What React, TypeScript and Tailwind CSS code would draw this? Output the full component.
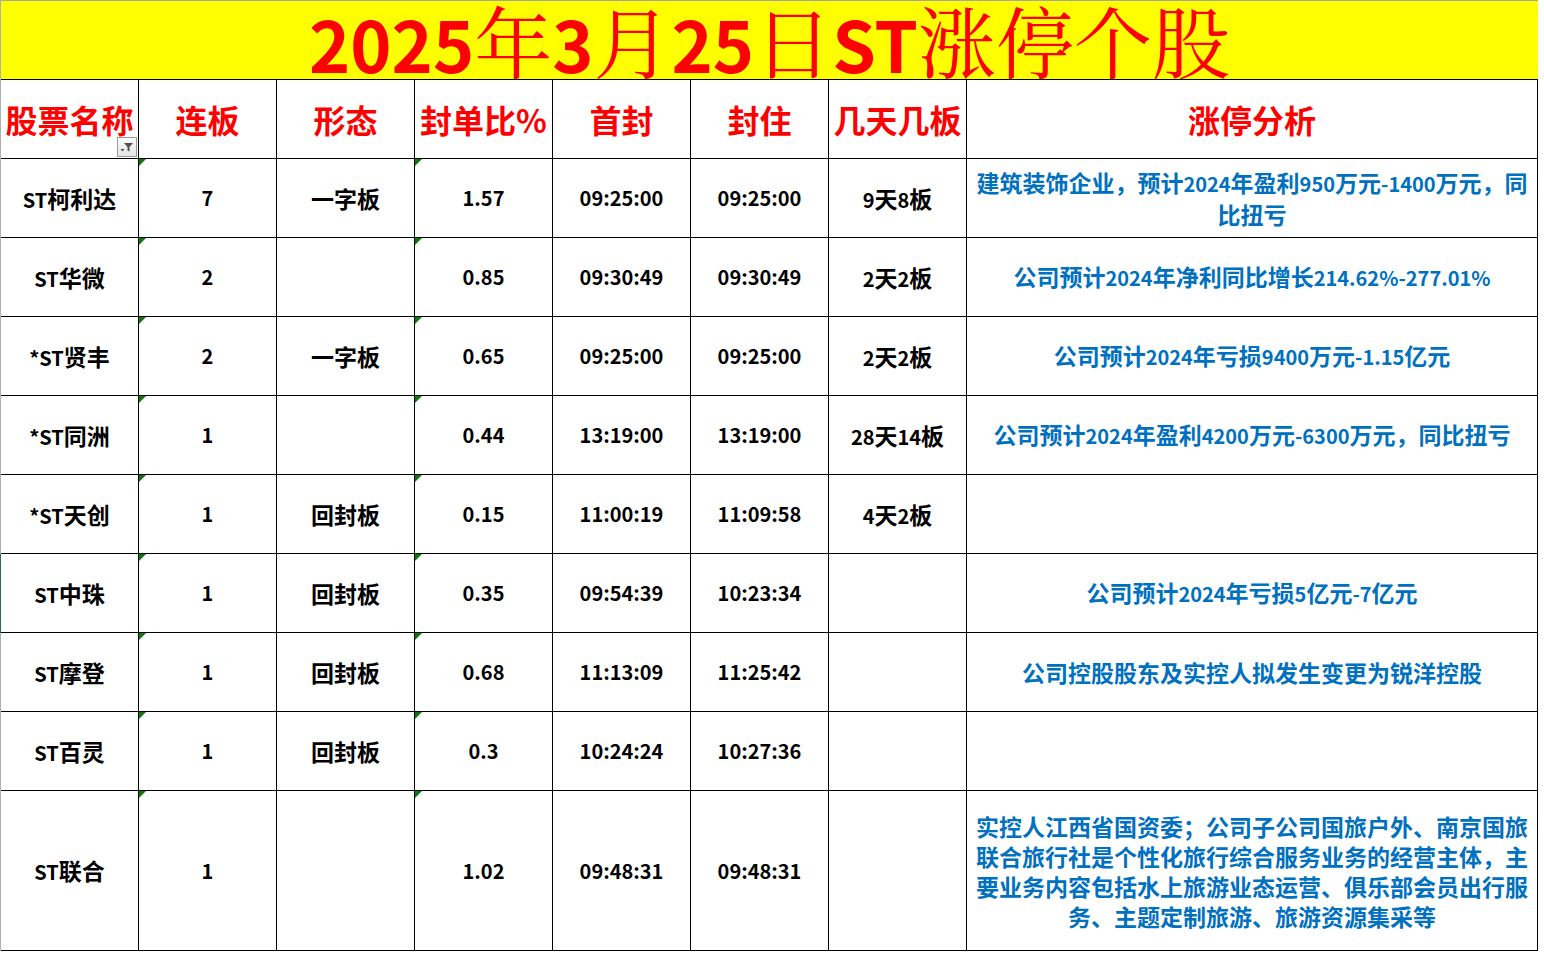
import React from "react";

type Row = {
  name: string;
  lb: string;
  xt: string;
  fd: string;
  sf: string;
  fz: string;
  jt: string;
  an: string[];
  tall?: boolean;
};

const rows: Row[] = [
  { name: "ST柯利达", lb: "7", xt: "一字板", fd: "1.57", sf: "09:25:00", fz: "09:25:00", jt: "9天8板", an: ["建筑装饰企业，预计2024年盈利950万元-1400万元，同", "比扭亏"] },
  { name: "ST华微", lb: "2", xt: "", fd: "0.85", sf: "09:30:49", fz: "09:30:49", jt: "2天2板", an: ["公司预计2024年净利同比增长214.62%-277.01%"] },
  { name: "*ST贤丰", lb: "2", xt: "一字板", fd: "0.65", sf: "09:25:00", fz: "09:25:00", jt: "2天2板", an: ["公司预计2024年亏损9400万元-1.15亿元"] },
  { name: "*ST同洲", lb: "1", xt: "", fd: "0.44", sf: "13:19:00", fz: "13:19:00", jt: "28天14板", an: ["公司预计2024年盈利4200万元-6300万元，同比扭亏"] },
  { name: "*ST天创", lb: "1", xt: "回封板", fd: "0.15", sf: "11:00:19", fz: "11:09:58", jt: "4天2板", an: [] },
  { name: "ST中珠", lb: "1", xt: "回封板", fd: "0.35", sf: "09:54:39", fz: "10:23:34", jt: "", an: ["公司预计2024年亏损5亿元-7亿元"] },
  { name: "ST摩登", lb: "1", xt: "回封板", fd: "0.68", sf: "11:13:09", fz: "11:25:42", jt: "", an: ["公司控股股东及实控人拟发生变更为锐洋控股"] },
  { name: "ST百灵", lb: "1", xt: "回封板", fd: "0.3", sf: "10:24:24", fz: "10:27:36", jt: "", an: [] },
  {
    name: "ST联合",
    lb: "1",
    xt: "",
    fd: "1.02",
    sf: "09:48:31",
    fz: "09:48:31",
    jt: "",
    tall: true,
    an: [
      "实控人江西省国资委；公司子公司国旅户外、南京国旅",
      "联合旅行社是个性化旅行综合服务业务的经营主体，主",
      "要业务内容包括水上旅游业态运营、俱乐部会员出行服",
      "务、主题定制旅游、旅游资源集采等",
    ],
  },
];

const headers = ["股票名称", "连板", "形态", "封单比%", "首封", "封住", "几天几板", "涨停分析"];

const FONT = { fontFamily: '"Noto Sans CJK SC", "Noto Sans", sans-serif' };
const SERIF = { fontFamily: '"Noto Serif CJK SC", "Noto Sans CJK SC", serif' };

// Render ASCII runs a little smaller so Latin/digits match the narrower reference face.
function Mixed({ text }: { text: string }) {
  const parts = text.split(/([\x20-\x7E]+)/).filter((p) => p.length > 0);
  return (
    <>
      {parts.map((p, i) =>
        /^[\x20-\x7E]+$/.test(p) ? (
          <span key={i} className="text-[20px]">
            {p}
          </span>
        ) : (
          <span key={i}>{p}</span>
        )
      )}
    </>
  );
}

function Tri() {
  return (
    <span className="absolute left-0 top-0 h-0 w-0 border-t-[7px] border-r-[7px] border-t-[#0b7a0b] border-r-transparent" />
  );
}

function FilterBtn() {
  return (
    <span className="absolute right-[1px] bottom-[1px] flex h-[20px] w-[20px] items-center justify-center border border-[#9a9a9a] bg-gradient-to-b from-[#fbfbfb] to-[#e4e4e4]">
      <svg width="16" height="14" viewBox="0 0 16 14">
        <path d="M5 3 H14 L10.5 7 V11.5 L8.5 10.5 V7 Z" fill="#505050" />
        <path d="M1.5 9 H5.5 L3.5 11.5 Z" fill="#505050" />
      </svg>
    </span>
  );
}

export default function App() {
  return (
    <div className="min-h-screen w-[1544px] bg-white" style={FONT}>
      <div className="w-[1538px] border-l border-[#b0b0b0]">
        {/* Title */}
        <div className="flex h-[80px] justify-center overflow-hidden border-t border-b border-t-[#a6a6a6] border-b-black bg-[#ffff00] text-[#ff0000]">
          <div className="whitespace-nowrap text-[78px] leading-[76px]">
            <span className="text-[70px] font-bold">2025</span>
            <span className="font-normal" style={SERIF}>年</span>
            <span className="text-[70px] font-bold">3</span>
            <span className="font-normal" style={SERIF}>月</span>
            <span className="text-[70px] font-bold">25</span>
            <span className="font-normal" style={SERIF}>日</span>
            <span className="text-[70px] font-bold">ST</span>
            <span className="font-normal" style={SERIF}>涨停个股</span>
          </div>
        </div>

        {/* Header */}
        <div className="grid h-[79px] grid-cols-[138px_138px_138px_138px_138px_138px_138px_571px]">
          {headers.map((h, i) => (
            <div
              key={h}
              className="relative flex items-center justify-center whitespace-nowrap border-r border-b border-black text-[32px] font-bold text-[#ff0000]"
            >
              {h}
              {i === 0 && <FilterBtn />}
            </div>
          ))}
        </div>

        {/* Rows */}
        {rows.map((r) => (
          <div
            key={r.name}
            className={`grid grid-cols-[138px_138px_138px_138px_138px_138px_138px_571px] text-[23px] font-bold text-black ${
              r.tall ? "h-[160px]" : "h-[79px]"
            } ${r.name === "ST中珠" ? "-ml-px border-l border-[#217346]" : ""}`}
          >
            <div className="flex items-center justify-center whitespace-nowrap border-r border-b border-black">
              <span>
                <Mixed text={r.name} />
              </span>
            </div>
            <div className="relative flex items-center justify-center border-r border-b border-black text-[20px]">
              <Tri />
              {r.lb}
            </div>
            <div className="flex items-center justify-center whitespace-nowrap border-r border-b border-black">{r.xt}</div>
            <div className="relative flex items-center justify-center border-r border-b border-black text-[20px]">
              <Tri />
              {r.fd}
            </div>
            <div className="flex items-center justify-center border-r border-b border-black text-[20px]">{r.sf}</div>
            <div className="flex items-center justify-center border-r border-b border-black text-[20px]">{r.fz}</div>
            <div className="flex items-center justify-center whitespace-nowrap border-r border-b border-black">
              <span>
                <Mixed text={r.jt} />
              </span>
            </div>
            <div className="flex flex-col items-center justify-center border-r border-b border-black px-1 text-center leading-[30px] text-[#0070c0]">
              {r.an.map((l) => (
                <div key={l} className="whitespace-nowrap">
                  <Mixed text={l} />
                </div>
              ))}
            </div>
          </div>
        ))}
      </div>
    </div>
  );
}
